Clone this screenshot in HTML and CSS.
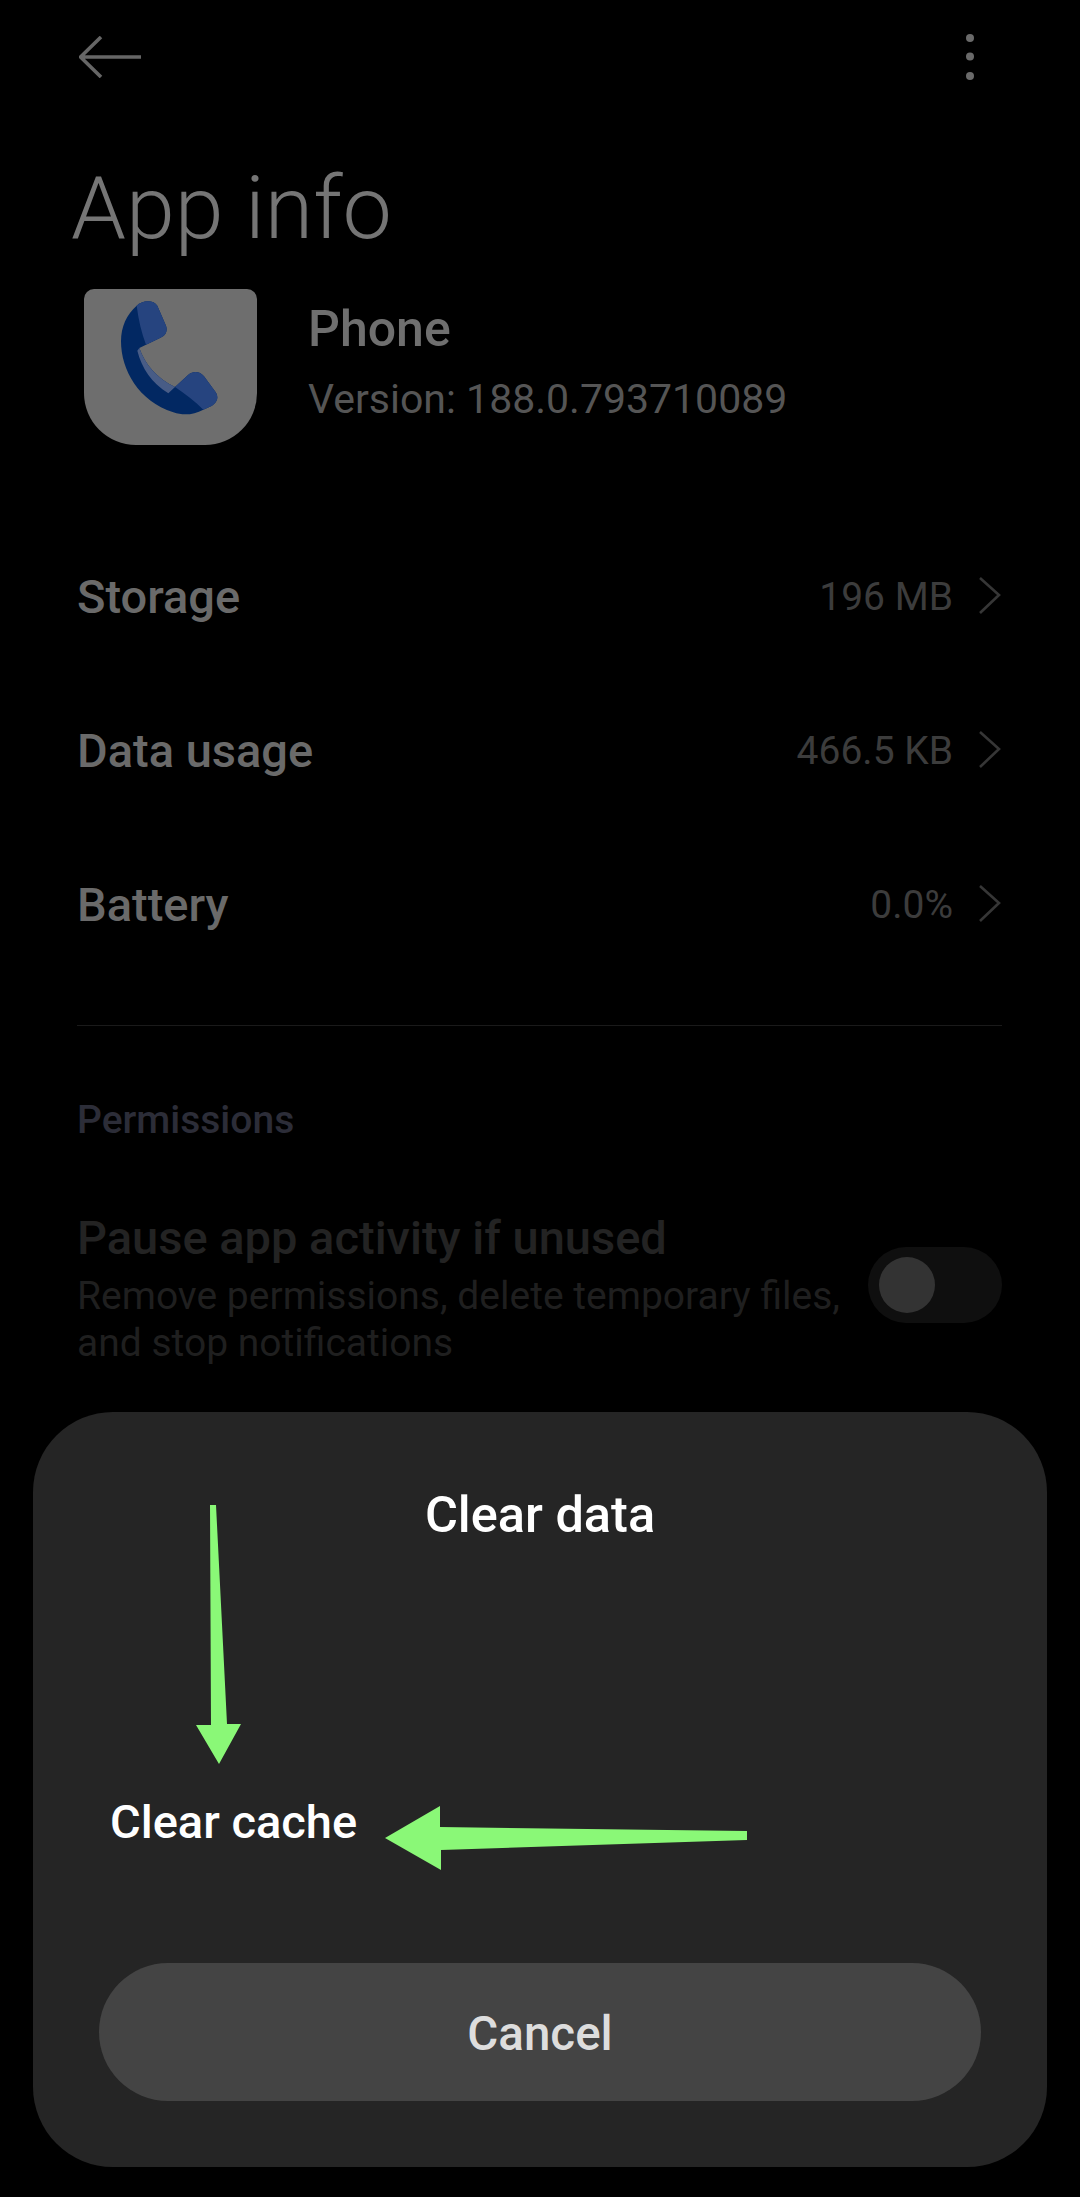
FILE: index.html
```html
<!DOCTYPE html>
<html lang="en">
<head>
<meta charset="utf-8">
<title>App info</title>
<link rel="stylesheet" href="styles.css">
</head>
<body>
<div class="screen">
  <header class="topbar">
    <svg class="back" width="62" height="42" viewBox="0 0 62 42" fill="none"><path d="M22 1 1.500 21 22 41M1.500 21H62" stroke="#666" stroke-width="3.600"/></svg>
    <svg class="more" width="10" height="48" viewBox="0 0 10 48"><g fill="#6a6a6a"><circle cx="5" cy="5" r="4"/><circle cx="5" cy="23.500" r="4"/><circle cx="5" cy="43" r="4"/></g></svg>
  </header>
  <h1 class="title">App info</h1>
  <section class="hero">
    <div class="app-icon">
      <svg width="173" height="156" viewBox="72 58 519 468">
        <path d="M230 108C245 92 280 88 292 108L318 168C324 185 316 198 300 205L238 235C255 285 290 325 345 352L385 315C400 303 420 305 432 320L465 365C478 382 472 398 456 408L430 420C400 436 370 438 340 428C235 395 183 300 183 215C183 170 200 135 230 108Z" fill="#022862"/>
        <path d="M230 108C245 92 280 88 292 108L318 168C324 185 316 198 300 205L258 225C245 190 235 150 230 108Z" fill="#26447f"/>
        <path d="M345 352 385 315C400 303 420 305 432 320L465 365C478 382 472 398 456 408L430 420C405 395 375 372 345 352Z" fill="#26447f"/>
        <path d="M232 243 238 235C255 285 290 325 345 352L325 371C275 340 245 295 232 243Z" fill="#485c86"/>
      </svg>
    </div>
    <div class="hero-text">
      <div class="app-name">Phone</div>
      <div class="app-version">Version: 188.0.793710089</div>
    </div>
  </section>
  <ul class="rows">
    <li class="row"><span class="row-label">Storage</span><span class="row-value">196 MB</span><svg class="chev" width="22" height="40" viewBox="0 0 22 40" fill="none"><path d="M1 1 20 18 1 36" stroke="#363636" stroke-width="2.600"/></svg></li>
    <li class="row"><span class="row-label">Data usage</span><span class="row-value">466.5 KB</span><svg class="chev" width="22" height="40" viewBox="0 0 22 40" fill="none"><path d="M1 1 20 18 1 36" stroke="#363636" stroke-width="2.600"/></svg></li>
    <li class="row"><span class="row-label">Battery</span><span class="row-value">0.0%</span><svg class="chev" width="22" height="40" viewBox="0 0 22 40" fill="none"><path d="M1 1 20 18 1 36" stroke="#363636" stroke-width="2.600"/></svg></li>
  </ul>
  <hr class="divider">
  <h2 class="section">Permissions</h2>
  <div class="pause">
    <div class="pause-text">
      <div class="pause-title">Pause app activity if unused</div>
      <div class="pause-desc">Remove permissions, delete temporary files, and stop notifications</div>
    </div>
    <div class="toggle"><span class="knob"></span></div>
  </div>
  <div class="dialog">
    <div class="dialog-title">Clear data</div>
    <div class="dialog-item">Clear cache</div>
    <div class="cancel">Cancel</div>
    <svg class="marks" width="1014" height="755" viewBox="33 1412 1014 755">
      <path d="M210 1505H216L227 1724H241L219 1764 196 1725H211Z" fill="#8af877"/>
      <path d="M385 1838 440 1806V1827L747 1831V1840L441 1850V1870Z" fill="#8af877"/>
    </svg>
  </div>
</div>
</body>
</html>
```

FILE: styles.css
```css
* { box-sizing: border-box; }
html, body { margin: 0; background: #000; }
.screen {
  position: relative;
  width: 1080px;
  height: 2197px;
  overflow: hidden;
  background: #000;
  font-family: Roboto, "Liberation Sans", sans-serif;
}
.topbar {
  height: 114px;
  padding: 0 105px 0 79px;
  display: flex;
  align-items: center;
  justify-content: space-between;
}
.title {
  margin: 42px 0 29px 71px;
  font-size: 88px;
  line-height: 104px;
  font-weight: 300;
  color: #757575;
}
.hero { display: flex; margin: 0 0 75px 84px; height: 156px; }
.app-icon {
  width: 173px;
  height: 156px;
  background: #6e6e6e;
  border-radius: 10px 10px 52px 52px;
  overflow: hidden;
}
.app-icon svg { display: block; }
.hero-text { margin-left: 51px; padding-top: 13px; }
.app-name { font-size: 50px; line-height: 54px; font-weight: 500; color: #6f6f6f; }
.app-version { margin-top: 19px; font-size: 41px; line-height: 48px; color: #555; }
.rows { list-style: none; margin: 0; padding: 0 79px 0 77px; }
.row { height: 154px; display: flex; align-items: center; }
.row-label { flex: 1; font-size: 47px; line-height: 54px; font-weight: 500; color: #6a6a6a; }
.row-value { font-size: 39px; line-height: 46px; color: #3c3c3c; margin-right: -1px; }
.chev { margin-left: 27px; }
.divider { margin: 43px 78px 0 77px; height: 1px; border: 0; background: #1a1a1a; }
.section { margin: 73px 78px 70px 77px; font-size: 39px; line-height: 42px; font-weight: 500; color: #2c2d38; }
.pause { display: flex; margin: 0 78px 0 77px; justify-content: space-between; align-items: flex-start; }
.pause-text { width: 780px; }
.pause-title { font-size: 47px; line-height: 54px; font-weight: 500; color: #232323; }
.pause-desc { margin-top: 8px; font-size: 39px; line-height: 47px; color: #1f1f1f; }
.toggle {
  width: 134px;
  height: 76px;
  margin-top: 36px;
  padding: 10px 11px;
  border-radius: 38px;
  background: #0f0f0f;
}
.knob { display: block; width: 56px; height: 56px; border-radius: 50%; background: #333; }
.dialog {
  position: absolute;
  left: 33px;
  top: 1412px;
  width: 1014px;
  height: 755px;
  padding: 75px 66px 66px;
  border-radius: 80px;
  background: #252525;
}
.dialog-title { font-size: 50.500px; line-height: 56px; font-weight: 500; color: #fff; text-align: center; }
.dialog-item { margin: 251px 0 113px 11px; font-size: 47px; line-height: 56px; font-weight: 500; color: #fff; }
.cancel {
  height: 138px;
  padding-top: 4px;
  border-radius: 69px;
  background: #444;
  display: flex;
  align-items: center;
  justify-content: center;
  font-size: 47.500px;
  font-weight: 500;
  color: #ddd;
}
.marks { position: absolute; left: 0; top: 0; }
```
